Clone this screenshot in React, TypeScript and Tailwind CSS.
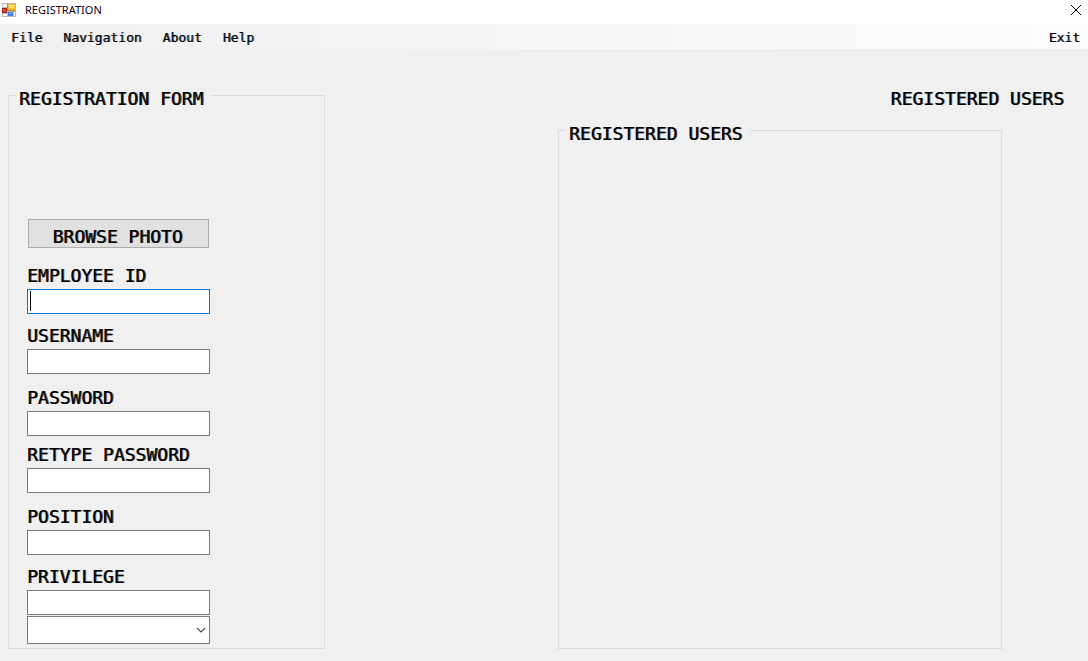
import React from "react";

type FieldProps = {
  id: string;
  label: string;
  type?: string;
  autoFocus?: boolean;
  className?: string;
};

function Field({ id, label, type = "text", autoFocus, className = "" }: FieldProps) {
  return (
    <div className={className}>
      <label htmlFor={id} className="block h-[25px] text-lg leading-6">
        {label}
      </label>
      <div className="relative w-[183px]">
        <input
          id={id}
          type={type}
          autoFocus={autoFocus}
          className="peer block h-[25px] w-full border border-[#7a7a7a] bg-white px-0.5 text-lg leading-5 outline-none focus:border-[#0078d7] focus:placeholder-shown:caret-transparent"
          placeholder=" "
        />
        <span className="pointer-events-none absolute top-0.5 left-[3px] hidden h-5 w-px bg-black peer-focus:peer-placeholder-shown:block" />
      </div>
    </div>
  );
}

function AppIcon() {
  return (
    <svg width="14" height="14" viewBox="0 0 14 14" shapeRendering="crispEdges" aria-hidden="true">
      <rect width="14" height="14" fill="#b9b9b9" />
      <rect x="1" y="1" width="4" height="3" fill="#fff" />
      <rect x="1" y="11" width="4" height="2" fill="#fff" />
      <rect x="12" y="9" width="1" height="4" fill="#fff" />
      <rect x="5" y="1" width="8" height="7" fill="#c08a10" />
      <rect x="6" y="1" width="7" height="6" fill="#f3bd2c" />
      <rect x="7" y="2" width="5" height="3" fill="#ffdc6a" />
      <rect x="0" y="5" width="5" height="5" fill="#9c2018" />
      <rect x="1" y="6" width="3" height="3" fill="#d8453a" />
      <rect x="6" y="9" width="5" height="4" fill="#3f7be6" />
      <rect x="7" y="10" width="3" height="1" fill="#8db6ff" />
    </svg>
  );
}

const menus = ["File", "Navigation", "About", "Help"];

export default function App() {
  return (
    <div className="flex min-h-screen flex-col bg-[#f0f0f0] font-['DejaVu_Sans_Mono',monospace] text-black">
      <header className="flex h-6 items-start justify-between bg-white pr-1.5 pl-0.5">
        <div className="flex h-5 items-center gap-[9px]">
          <AppIcon />
          <h1 className="font-['Noto_Sans',sans-serif] text-[11px] leading-5 text-[#16001c]">REGISTRATION</h1>
        </div>
        <button type="button" aria-label="Close" className="flex h-5 items-center">
          <svg width="12" height="12" viewBox="0 0 12 12" stroke="#000" strokeWidth="1" aria-hidden="true">
            <path d="M1 1 L11 11 M11 1 L1 11" />
          </svg>
        </button>
      </header>

      <nav className="flex h-[25px] items-center justify-between bg-linear-to-r from-[#f0f0f0] to-[#fdfdfd] pt-0.5 pr-2 pl-[11px] text-[13px] leading-5">
        <div className="flex gap-[21px]">
          {menus.map((name) => (
            <button key={name} type="button" className="[text-shadow:1px_0_#0008]">
              {name}
            </button>
          ))}
        </div>
        <button type="button" className="[text-shadow:1px_0_#0008]">
          Exit
        </button>
      </nav>

      <main className="flex flex-1 gap-[233px] px-2 pt-8 pb-3 [text-shadow:1px_0_#000a]">
        <form className="flex w-[317px] shrink-0">
          <fieldset className="w-full border border-[#dcdcdc] pb-1">
            <legend className="ml-1.5 pt-2 pr-2 pl-1 text-lg leading-5">REGISTRATION FORM</legend>
            <div className="pl-[18px]">
              <div className="h-[110px]" />
              <button
                type="button"
                className="ml-px block h-[29px] w-[181px] border border-[#adadad] bg-[#e1e1e1] pt-1.5 pr-0.5 text-lg leading-5 [text-shadow:1px_0_#000a]"
              >
                BROWSE PHOTO
              </button>
              <Field id="employee-id" label="EMPLOYEE ID" autoFocus className="mt-4" />
              <Field id="username" label="USERNAME" className="mt-2.5" />
              <Field id="password" label="PASSWORD" type="password" className="mt-3" />
              <Field id="retype" label="RETYPE PASSWORD" type="password" className="mt-[7px]" />
              <Field id="position" label="POSITION" className="mt-3" />
              <Field id="privilege" label="PRIVILEGE" className="mt-2.5" />
              <div className="mt-px grid w-[183px] items-center">
                <select
                  aria-label="Privilege level"
                  className="col-start-1 row-start-1 h-7 w-full appearance-none border border-[#7a7a7a] bg-white px-1 text-lg outline-none"
                >
                  <option value=""></option>
                </select>
                <svg
                  className="pointer-events-none col-start-1 row-start-1 mr-1 justify-self-end"
                  width="10"
                  height="6"
                  viewBox="0 0 10 6"
                  fill="none"
                  stroke="#505050"
                  strokeWidth="1.2"
                  aria-hidden="true"
                >
                  <path d="M1 1 L5 5 L9 1" />
                </svg>
              </div>
            </div>
          </fieldset>
        </form>

        <section className="flex min-w-0 flex-1 flex-col">
          <h2 className="pt-2 pr-4 text-right text-lg leading-5">REGISTERED USERS</h2>
          <fieldset className="mt-[7px] mr-[78px] flex-1 border border-[#dcdcdc]">
            <legend className="ml-1.5 pt-2 pr-2 pl-1 text-lg leading-5">REGISTERED USERS</legend>
          </fieldset>
        </section>
      </main>
    </div>
  );
}
